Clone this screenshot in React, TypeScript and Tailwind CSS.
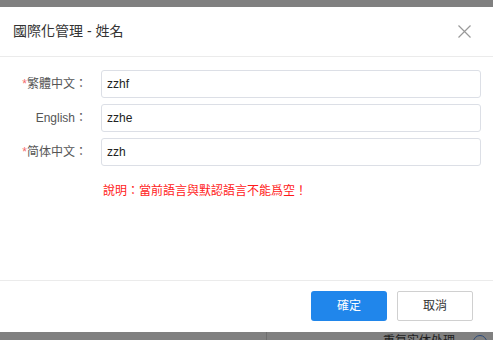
import React from 'react'

const font = { fontFamily: '"Liberation Sans", "Noto Sans CJK TC", sans-serif' }

interface FieldProps {
  label: string
  value: string
  required?: boolean
}

const Field: React.FC<FieldProps> = ({ label, value, required }) => (
  <div className="flex items-center h-[28px]">
    <label className="w-[88px] pr-[1px] text-right text-[12px] text-[#555]">
      {required && <span className="text-[#f56c6c]">*</span>}
      {label}：
    </label>
    <div className="ml-[13px] flex-1 h-[28px] border border-[#dcdfe6] rounded-[3px] flex items-center px-[5px] text-[12px] text-[#222]">
      {value}
    </div>
  </div>
)

export default function App() {
  return (
    <div className="w-[493px] h-[340px] bg-[#808080] flex flex-col overflow-hidden" style={font}>
      <div className="h-[7px] shrink-0" />

      {/* Dialog */}
      <div className="bg-white h-[325px] shrink-0 flex flex-col">
        <div className="h-[50px] shrink-0 flex items-center justify-between pl-[13px] pr-[22px] border-b border-[#ebebeb]">
          <span className="text-[14px] text-[#333]">國際化管理 - 姓名</span>
          <svg width="13" height="13" viewBox="0 0 13 13" className="text-[#999]">
            <path d="M0.5 0.5L12.5 12.5M12.5 0.5L0.5 12.5" stroke="currentColor" strokeWidth="1.2" />
          </svg>
        </div>

        <div className="flex-1 pt-[13px] pr-[12px] flex flex-col gap-[6px]">
          <Field label="繁體中文" value="zzhf" required />
          <Field label="English" value="zzhe" />
          <Field label="简体中文" value="zzh" required />
          <p className="ml-[103px] mt-[10px] text-[12px] text-[#ff1a1a]">說明：當前語言與默認語言不能爲空！</p>
        </div>

        <div className="h-[52px] shrink-0 border-t border-[#ebebeb] flex items-start justify-end gap-[10px] pt-[10px] pr-[20px]">
          <button className="w-[76px] h-[30px] rounded-[3px] bg-[#2086eb] text-white text-[12px]">確定</button>
          <button className="w-[76px] h-[30px] rounded-[2px] border border-[#d0d0d0] bg-white text-[#333] text-[12px]">取消</button>
        </div>
      </div>

      {/* Page behind the mask, only its top edge shows */}
      <div className="flex-1 flex items-start">
        <div className="w-[267px] h-full border-r border-[#6e6e6e]" />
        <div className="flex-1 flex items-start justify-end pt-[3px] pr-[6px] gap-[18px]">
          <span className="text-[12px] leading-[12px] text-[#1e1e1e]">重复实体处理</span>
          <span className="w-[14px] h-[14px] rounded-full border border-[#2a4a7a]" />
        </div>
      </div>
    </div>
  )
}
